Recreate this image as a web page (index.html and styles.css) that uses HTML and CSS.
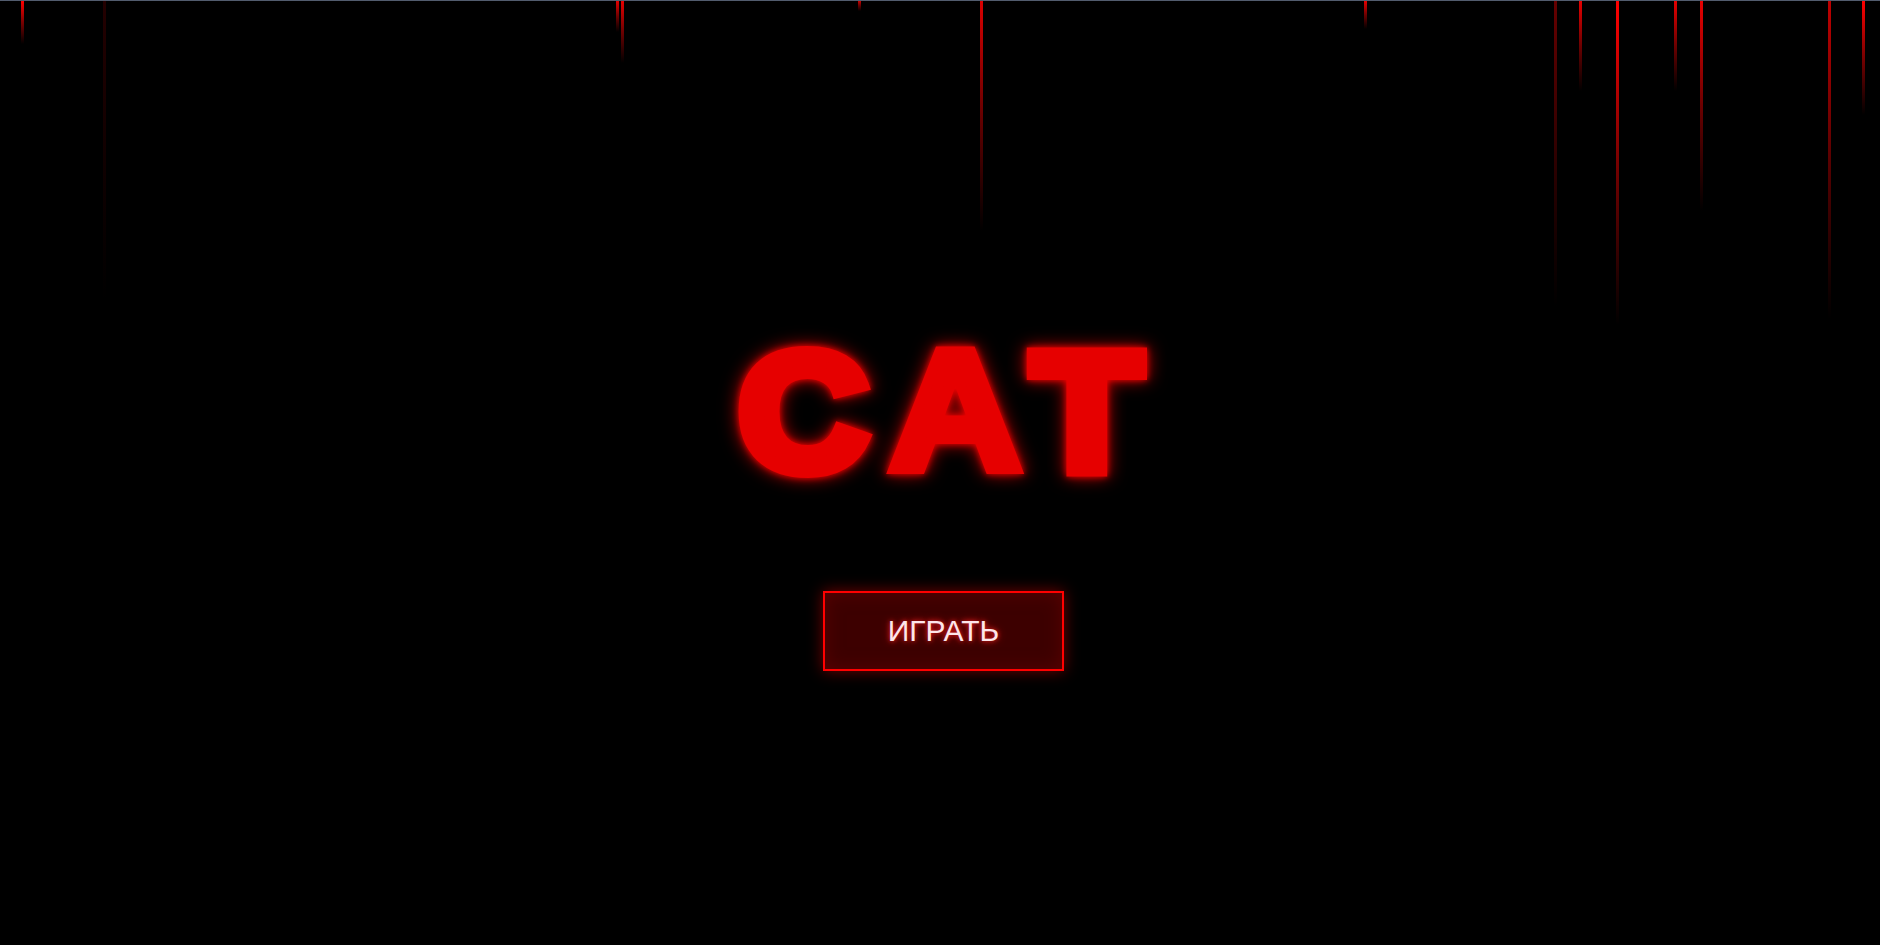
FILE: index.html
```html
<!DOCTYPE html>
<html lang="ru">
<head>
<meta charset="utf-8">
<title>CAT</title>
<link rel="stylesheet" href="styles.css">
</head>
<body>
<div class="screen">
  <div class="drips" aria-hidden="true">
    <span class="drip" style="left:21px;height:43px;opacity:1"></span>
    <span class="drip" style="left:103px;height:300px;opacity:.14"></span>
    <span class="drip" style="left:616px;height:31px;opacity:.9"></span>
    <span class="drip" style="left:621px;height:62px;opacity:.9"></span>
    <span class="drip" style="left:858px;height:10px;opacity:.8"></span>
    <span class="drip" style="left:980px;height:230px;opacity:.85"></span>
    <span class="drip" style="left:1364px;height:28px;opacity:.9"></span>
    <span class="drip" style="left:1554px;height:306px;opacity:.4"></span>
    <span class="drip" style="left:1579px;height:90px;opacity:.9"></span>
    <span class="drip" style="left:1616px;height:324px;opacity:1"></span>
    <span class="drip" style="left:1674px;height:90px;opacity:.9"></span>
    <span class="drip" style="left:1700px;height:210px;opacity:.9"></span>
    <span class="drip" style="left:1828px;height:318px;opacity:.75"></span>
    <span class="drip" style="left:1862px;height:114px;opacity:1"></span>
  </div>

  <main class="menu">
    <h1 class="title"><span class="title-c">C</span><span class="title-a">A</span>T</h1>
    <button class="play-btn" type="button">ИГРАТЬ</button>
  </main>
</div>
</body>
</html>
```

FILE: styles.css
```css
* {
  box-sizing: border-box;
}

html,
body {
  margin: 0;
  padding: 0;
  background: #000;
  height: 100%;
  overflow: hidden;
}

.screen {
  position: relative;
  height: 100vh;
  border-top: 1px solid #525c6e;
  background: #000;
  display: flex;
  flex-direction: column;
  align-items: center;
  justify-content: center;
  padding-top: 52px;
}

/* blood streaks running down from the top edge */
.drips {
  position: absolute;
  inset: 0;
  pointer-events: none;
}

.drip {
  position: absolute;
  top: 0;
  width: 3px;
  background: linear-gradient(to bottom, #ff0000 0%, rgba(200, 0, 0, 0.6) 50%, rgba(120, 0, 0, 0) 100%);
}

.menu {
  position: relative;
  display: flex;
  flex-direction: column;
  align-items: center;
  gap: 96px;
}

.title {
  margin: 0;
  font-family: "Liberation Sans", Arial, sans-serif;
  font-weight: 700;
  font-size: 167px;
  line-height: 167px;
  letter-spacing: 0;
  color: #e60000;
  -webkit-text-stroke: 14px #e60000;
  transform: scaleX(1.07);
  filter: drop-shadow(0 0 3px rgba(255, 0, 0, 0.9)) drop-shadow(0 0 8px rgba(255, 0, 0, 0.7));
}

.title-c {
  letter-spacing: 20px;
}

/* thinner outline on the A keeps its counter open */
.title-a {
  font-size: 171px;
  line-height: 150px;
  letter-spacing: 10px;
  -webkit-text-stroke-width: 10px;
}

.play-btn {
  width: 241px;
  height: 80px;
  margin-left: 7px;
  padding: 0;
  border: 2px solid #ff0000;
  background: #3d0000;
  color: #fde6ea;
  font-family: "Liberation Sans", Arial, sans-serif;
  font-size: 30px;
  line-height: 1;
  cursor: pointer;
  box-shadow: 0 0 14px rgba(255, 0, 0, 0.45), inset 0 0 18px rgba(120, 0, 0, 0.5);
  text-shadow: 0 0 5px rgba(255, 40, 40, 0.9), 0 0 10px rgba(255, 0, 0, 0.5);
}
```
